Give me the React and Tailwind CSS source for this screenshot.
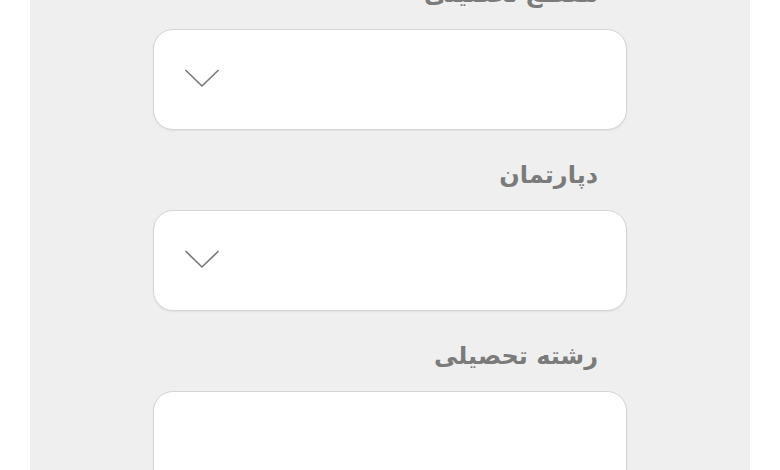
import { useState } from "react";

function Chevron() {
  return (
    <svg width="34" height="19" viewBox="0 0 34 19" fill="none" className="-mt-[2px]">
      <path d="M1 1.5 L17 17 L33 1.5" stroke="#7a7a7a" strokeWidth="1.7" strokeLinecap="round" strokeLinejoin="round" />
    </svg>
  );
}

function Field({ label, select }) {
  return (
    <div className="flex flex-col items-center">
      <div className="w-[474px] h-[40px] mt-[25px] mb-[15px] flex items-center justify-end pr-[29px]">
        <span dir="rtl" className="text-[24px] leading-[40px] font-bold text-[#7b7b7b]">
          {label}
        </span>
      </div>
      <div className="w-[474px] h-[101px] bg-white rounded-[20px] border-[1.5px] border-[#d4d4d4] shadow-[0_1px_2px_rgba(0,0,0,0.06)] flex items-center px-[31px]">
        {select && <Chevron />}
      </div>
    </div>
  );
}

export default function App() {
  const [fields] = useState([
    { label: "مقطع تحصیلی", select: true },
    { label: "دپارتمان", select: true },
    { label: "رشته تحصیلی", select: false },
  ]);

  return (
    <div className="w-[780px] h-[470px] bg-white overflow-hidden" style={{ fontFamily: '"DejaVu Sans", "Noto Sans", sans-serif' }}>
      <div className="ml-[30px] w-[720px] h-[470px] bg-[#efefef] overflow-hidden">
        <div className="-mt-[51px]">
          {fields.map((f, i) => (
            <Field key={i} label={f.label} select={f.select} />
          ))}
        </div>
      </div>
    </div>
  );
}
